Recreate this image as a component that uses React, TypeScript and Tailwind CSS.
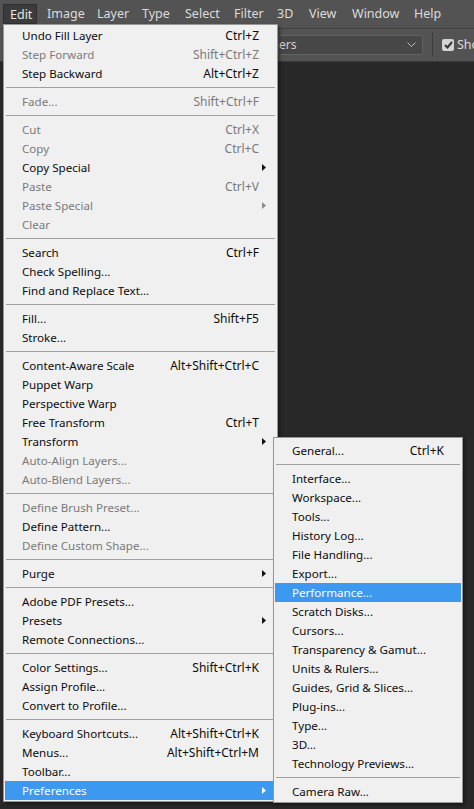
import React from "react"

type Item =
  | { sep: true }
  | { label: string; keys?: string; off?: boolean; sub?: boolean; hot?: boolean; sep?: false }

const editMenu: Item[] = [
  { label: "Undo Fill Layer", keys: "Ctrl+Z" },
  { label: "Step Forward", keys: "Shift+Ctrl+Z", off: true },
  { label: "Step Backward", keys: "Alt+Ctrl+Z" },
  { sep: true },
  { label: "Fade...", keys: "Shift+Ctrl+F", off: true },
  { sep: true },
  { label: "Cut", keys: "Ctrl+X", off: true },
  { label: "Copy", keys: "Ctrl+C", off: true },
  { label: "Copy Special", sub: true },
  { label: "Paste", keys: "Ctrl+V", off: true },
  { label: "Paste Special", sub: true, off: true },
  { label: "Clear", off: true },
  { sep: true },
  { label: "Search", keys: "Ctrl+F" },
  { label: "Check Spelling..." },
  { label: "Find and Replace Text..." },
  { sep: true },
  { label: "Fill...", keys: "Shift+F5" },
  { label: "Stroke..." },
  { sep: true },
  { label: "Content-Aware Scale", keys: "Alt+Shift+Ctrl+C" },
  { label: "Puppet Warp" },
  { label: "Perspective Warp" },
  { label: "Free Transform", keys: "Ctrl+T" },
  { label: "Transform", sub: true },
  { label: "Auto-Align Layers...", off: true },
  { label: "Auto-Blend Layers...", off: true },
  { sep: true },
  { label: "Define Brush Preset...", off: true },
  { label: "Define Pattern..." },
  { label: "Define Custom Shape...", off: true },
  { sep: true },
  { label: "Purge", sub: true },
  { sep: true },
  { label: "Adobe PDF Presets..." },
  { label: "Presets", sub: true },
  { label: "Remote Connections..." },
  { sep: true },
  { label: "Color Settings...", keys: "Shift+Ctrl+K" },
  { label: "Assign Profile..." },
  { label: "Convert to Profile..." },
  { sep: true },
  { label: "Keyboard Shortcuts...", keys: "Alt+Shift+Ctrl+K" },
  { label: "Menus...", keys: "Alt+Shift+Ctrl+M" },
  { label: "Toolbar..." },
  { label: "Preferences", sub: true, hot: true },
]

const prefsMenu: Item[] = [
  { label: "General...", keys: "Ctrl+K" },
  { sep: true },
  { label: "Interface..." },
  { label: "Workspace..." },
  { label: "Tools..." },
  { label: "History Log..." },
  { label: "File Handling..." },
  { label: "Export..." },
  { label: "Performance...", hot: true },
  { label: "Scratch Disks..." },
  { label: "Cursors..." },
  { label: "Transparency & Gamut..." },
  { label: "Units & Rulers..." },
  { label: "Guides, Grid & Slices..." },
  { label: "Plug-ins..." },
  { label: "Type..." },
  { label: "3D..." },
  { label: "Technology Previews..." },
  { sep: true },
  { label: "Camera Raw..." },
]

// top menu titles with the width each slot takes in the bar
const topMenus: [string, string][] = [
  ["Image", "w-[50px]"],
  ["Layer", "w-[45px]"],
  ["Type", "w-[43px]"],
  ["Select", "w-[49px]"],
  ["Filter", "w-[43px]"],
  ["3D", "w-[32px]"],
  ["View", "w-[43px]"],
  ["Window", "w-[62px]"],
  ["Help", "w-[50px]"],
]

function Arrow({ color }: { color: string }) {
  return (
    <svg width="4" height="7" viewBox="0 0 4 7" className="absolute right-[10px] top-[6px]">
      <path d="M0 0 L4 3.5 L0 7 Z" fill={color} />
    </svg>
  )
}

function MenuList({ items }: { items: Item[] }) {
  return (
    <>
      {items.map((it, i) => {
        if (it.sep) {
          return (
            <div key={i} className="h-[9px] flex items-center px-[2px]">
              <div className="h-px w-full bg-[#a0a0a0]" />
            </div>
          )
        }
        const color = it.hot ? "text-white bg-[#3d99ef]" : it.off ? "text-[#7a7a7a]" : "text-[#0c0c0c]"
        return (
          <div key={i} className={`relative mx-px h-[19px] flex items-center justify-between pl-[17px] pr-[17px] ${color}`}>
            <span className="text-[11.6px]">{it.label}</span>
            {it.keys && <span>{it.keys}</span>}
            {it.sub && <Arrow color={it.hot ? "#ffffff" : it.off ? "#8a8a8a" : "#111111"} />}
          </div>
        )
      })}
    </>
  )
}

export default function App() {
  return (
    <div className="relative w-[474px] h-[809px] overflow-hidden bg-[#282828] text-[12px]" style={{ fontFamily: '"Noto Sans", "Open Sans", sans-serif' }}>
      {/* Menu bar */}
      <div className="h-[28px] bg-[#535353] flex items-start pt-[4px] pl-[3px] text-[#dcdcdc] text-[12.5px] leading-[19px]">
        <div className="shrink-0 w-[34px] h-[20px] pl-[6px] bg-[#3b3b3b] border border-[#2e2e2e] rounded-[1px] text-[#e6e6e6]">Edit</div>
        <div className="shrink-0 w-[3px]" />
        {topMenus.map(([m, w]) => (
          <div key={m} className={`shrink-0 h-[20px] pl-[7px] ${w}`}>
            {m}
          </div>
        ))}
      </div>
      {/* Options bar */}
      <div className="h-[34px] bg-[#535353] border-t border-[#434343] border-b border-b-[#3a3a3a] flex items-center">
        <div className="shrink-0 w-[278px]" />
        <div className="shrink-0 w-[145px] h-[20px] bg-[#474747] border border-[#626262] rounded-[2px] flex items-center justify-between pr-[6px] text-[#cfcfcf]">
          <span>ers</span>
          <svg width="9" height="6" viewBox="0 0 9 6">
            <path d="M0.5 0.5 L4.5 4.5 L8.5 0.5" stroke="#bdbdbd" strokeWidth="1" fill="none" />
          </svg>
        </div>
        <div className="shrink-0 ml-[9px] w-px h-[24px] bg-[#3c3c3c]" />
        <div className="shrink-0 ml-[9px] w-[12px] h-[12px] bg-[#d4d4d4] rounded-[2px] flex items-center justify-center">
          <svg width="9" height="8" viewBox="0 0 9 8">
            <path d="M1 4 L3.5 6.5 L8 1" stroke="#333" strokeWidth="2" fill="none" />
          </svg>
        </div>
        <span className="shrink-0 ml-[3px] text-[#dcdcdc] text-[12.5px]">Sho</span>
      </div>

      {/* Edit menu */}
      <div className="absolute left-[3px] top-[24px] w-[275px] bg-[#f0f0f0] border border-[#979797] pt-px pb-px shadow-[2px_2px_3px_rgba(0,0,0,0.4)]">
        <MenuList items={editMenu} />
      </div>

      {/* Preferences submenu */}
      <div className="absolute left-[273px] top-[437px] w-[190px] bg-[#f0f0f0] border border-[#979797] pt-[3px] pb-px shadow-[2px_2px_3px_rgba(0,0,0,0.4)]">
        <MenuList items={prefsMenu} />
      </div>
    </div>
  )
}
